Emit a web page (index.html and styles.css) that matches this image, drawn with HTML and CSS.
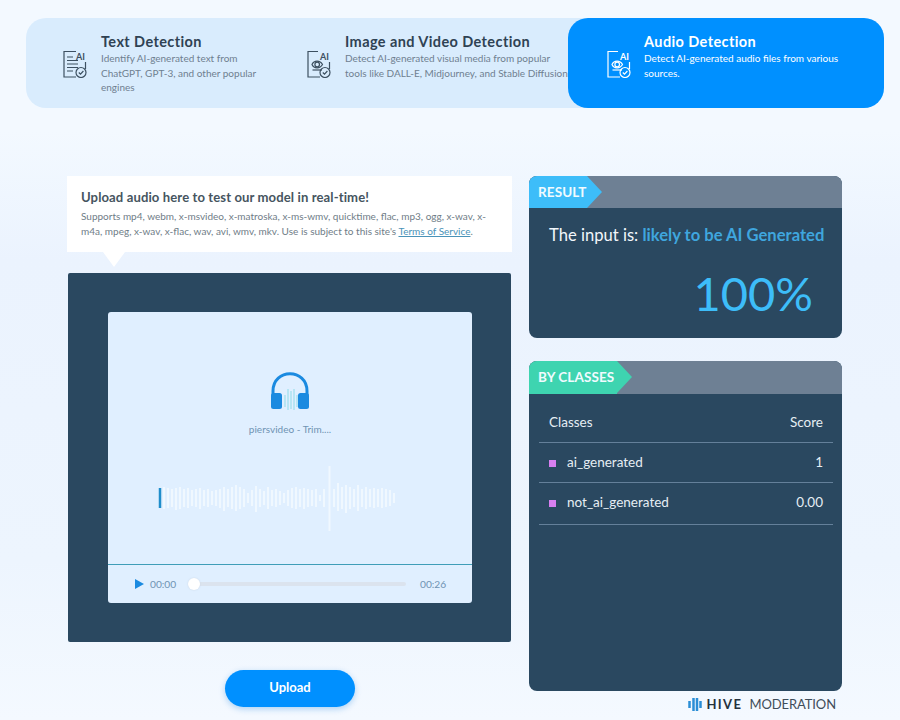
FILE: index.html
```html
<!DOCTYPE html>
<html lang="en">
<head>
<meta charset="UTF-8" />
<title>AI-Generated Content Detection</title>
<link rel="stylesheet" href="styles.css">
</head>
<body>

<nav class="tabs">
  <div class="tab tab-text">
    <svg class="tab-icon" viewBox="0 0 24 28">
      <path d="M13 1.5H1V27H13M22.500 12V19M4 7H10M4 10.500H15M4 14H15M4 17.500H15M4 21H10"/>
      <circle cx="18" cy="22.500" r="5"/>
      <path d="M15.800 22.500l1.700 1.700 2.900-3.200"/>
      <text x="13" y="9.500">AI</text>
    </svg>
    <div class="tab-copy">
      <h3>Text Detection</h3>
      <p>Identify AI-generated text from ChatGPT, GPT-3, and other popular engines</p>
    </div>
  </div>
  <div class="tab tab-image">
    <svg class="tab-icon" viewBox="0 0 24 28">
      <path d="M11 1.500H1V27H13M22.500 12V19"/>
      <path d="M5 14.500C7 10 13 10 15.500 14.500C13 19 7 19 5 14.500Z"/>
      <circle cx="10.200" cy="14.500" r="2.300"/>
      <path d="M5.500 20H15"/>
      <circle cx="18" cy="22.500" r="5"/>
      <path d="M15.800 22.500l1.700 1.700 2.900-3.200"/>
      <text x="13" y="9.500">AI</text>
    </svg>
    <div class="tab-copy">
      <h3>Image and Video Detection</h3>
      <p>Detect AI-generated visual media from popular tools like DALL-E, Midjourney, and Stable Diffusion</p>
    </div>
  </div>
  <div class="tab tab-audio">
    <svg class="tab-icon" viewBox="0 0 24 28">
      <path d="M11 1.500H1V27H13M22.500 12V19"/>
      <path d="M5 14.500C7 10 13 10 15.500 14.500C13 19 7 19 5 14.500Z"/>
      <circle cx="10.200" cy="14.500" r="2.300"/>
      <path d="M5.500 20H15"/>
      <circle cx="18" cy="22.500" r="5"/>
      <path d="M15.800 22.500l1.700 1.700 2.900-3.200"/>
      <text x="13" y="9.500">AI</text>
    </svg>
    <div class="tab-copy">
      <h3>Audio Detection</h3>
      <p>Detect AI-generated audio files from various sources.</p>
    </div>
  </div>
</nav>

<main class="layout">
  <section class="left">
    <div class="note">
      <h4>Upload audio here to test our model in real-time!</h4>
      <p>Supports mp4, webm, x-msvideo, x-matroska, x-ms-wmv, quicktime, flac, mp3, ogg, x-wav, x-m4a, mpeg, x-wav, x-flac, wav, avi, wmv, mkv. Use is subject to this site's <a href="#">Terms of Service</a>.</p>
    </div>
    <div class="stage">
      <div class="player">
        <div class="player-top">
          <svg class="headphones" viewBox="0 0 40 40">
            <path class="hp-arc" d="M3 24V20C3 -3 37 -3 37 20V24"/>
            <rect class="hp-cup" x="1" y="22" width="11" height="16" rx="2.500"/>
            <rect class="hp-cup" x="28" y="22" width="11" height="16" rx="2.500"/>
            <path class="hp-bars" d="M15 24V36M18 18V39M21 20V38M24 18V39M27 24V36"/>
          </svg>
          <div class="file-name">piersvideo - Trim....</div>
          <svg class="wave" viewBox="0 0 240 68">
            <path class="wave-bars" d="M6 22V44M10 23V43M14 24V42M18 23V45M22 22V44M26 24V42M30 23V43M34 25V41M38 24V42M42 23V44M46 25V41M50 24V42M54 26V40M58 25V41M62 24V43M66 22V46M70 24V42M74 22V44M78 20V46M82 22V44M86 24V42M90 28V38M94 25V41M98 21V47M102 24V42M106 26V40M110 22V44M114 25V41M118 24V42M122 26V40M126 28V38M130 25V41M134 23V43M138 22V44M142 24V42M146 23V44M150 24V42M154 25V41M158 24V42M162 30V36M166 24V42M171.500 1V66M176 24V42M180 18V46M184 22V44M188 20V48M192 22V44M196 24V42M200 20V46M204 24V42M208 22V44M212 24V42M216 23V43M220 24V42M224 23V43M228 24V42M232 25V41M236 28V38"/>
            <path class="wave-head" d="M2 23V43"/>
          </svg>
        </div>
        <div class="controls">
          <svg class="play" viewBox="0 0 9 10"><path d="M0 0L9 5L0 10Z"/></svg>
          <span class="time time-now">00:00</span>
          <div class="track"><span class="knob"></span></div>
          <span class="time">00:26</span>
        </div>
      </div>
    </div>
    <button class="upload">Upload</button>
  </section>

  <section class="right">
    <div class="card card-result">
      <div class="card-head"><span class="tag tag-blue">RESULT</span></div>
      <div class="result-body">
        <p class="verdict">The input is: <span>likely to be AI Generated</span></p>
        <div class="percent">100%</div>
      </div>
    </div>
    <div class="card card-classes">
      <div class="card-head"><span class="tag tag-green">BY CLASSES</span></div>
      <table class="classes">
        <tr><th>Classes</th><th class="num">Score</th></tr>
        <tr><td><i class="dot"></i>ai_generated</td><td class="num">1</td></tr>
        <tr><td><i class="dot"></i>not_ai_generated</td><td class="num">0.00</td></tr>
      </table>
    </div>
    <div class="brand">
      <svg class="brand-mark" viewBox="0 0 14 14"><path d="M1.500 4V11M5.500 1V14M9 1V14M12.500 4V11"/></svg>
      <b>HIVE</b><span>MODERATION</span>
    </div>
  </section>
</main>

</body>
</html>
```

FILE: styles.css
```css
* { box-sizing: border-box; }
html, body { height: 720px; overflow: hidden; }
body { margin: 0; padding-top: 18px; font-family: Lato, "Open Sans", sans-serif; color: #2f4253; background: linear-gradient(180deg, #f3f9ff 0, #f3f9ff 130px, #ebf3fe 260px, #edf5fe 560px, #f4f9ff 720px); }
h3, h4, p { margin: 0; }

.tabs { display: flex; width: 858px; height: 90px; margin-left: 26px; background: #d9ecfd; border-radius: 20px; }
.tab { display: flex; align-items: flex-start; padding-top: 15px; }
.tab-text { width: 244px; padding-left: 37px; }
.tab-image { width: 298px; padding-left: 37px; }
.tab-audio { width: 316px; padding-left: 39px; background: #0090ff; border-radius: 20px; color: #fff; }
.tab-icon { flex: none; width: 24px; height: 28px; margin: 17px 14px 0 0; fill: none; stroke: #3d5061; stroke-width: 1.200; }
.tab-audio .tab-icon { margin-right: 13px; stroke: #fff; }
.tab-icon text { font: 700 9px Lato, sans-serif; fill: #3d5061; stroke: none; }
.tab-audio .tab-icon text { fill: #fff; }
.tab-copy { flex: none; }
.tab-copy h3 { font-size: 14.500px; line-height: 18px; font-weight: 700; color: #2f4253; letter-spacing: .4px; }
.tab-copy p { font-size: 10px; line-height: 14.500px; color: #6f8090; }
.tab-text .tab-copy { width: 162px; }
.tab-image .tab-copy { width: 224px; }
.tab-audio .tab-copy { width: 200px; }
.tab-audio .tab-copy h3, .tab-audio .tab-copy p { color: #fff; }

.layout { display: flex; gap: 18px; margin: 68px 0 0 68px; }

.left { display: flex; flex-direction: column; width: 443px; }
.note { position: relative; height: 76px; margin: 0 -1px; padding: 13px 16px 0 14px; background: #fff; }
.note::after { content: ""; position: absolute; left: 36px; top: 76px; border-style: solid; border-width: 15px 11px 0; border-color: #fff transparent transparent; }
.note h4 { font-size: 13.100px; line-height: 17px; font-weight: 700; color: #46555f; letter-spacing: .1px; }
.note p { margin-top: 3px; font-size: 10px; line-height: 15px; color: #6f7d87; }
.note a { color: #4a93b8; }

.stage { display: flex; height: 369px; margin-top: 21px; padding: 39px 39px 39px 40px; background: #2a4860; border-radius: 2px; }
.player { display: flex; flex-direction: column; width: 100%; background: #e0efff; border-radius: 3px; }
.player-top { flex: 1; display: flex; flex-direction: column; align-items: center; padding-top: 59px; border-bottom: 1px solid #3f9db8; }
.headphones { width: 40px; height: 40px; }
.hp-arc { fill: none; stroke: #1b8ae0; stroke-width: 3; }
.hp-cup { fill: #1b8ae0; }
.hp-bars { fill: none; stroke: #8edbe8; stroke-width: 1; }
.file-name { margin-top: 12px; font-size: 10px; line-height: 12px; color: #6f93b3; }
.wave { width: 240px; height: 68px; margin-top: 30px; margin-left: -24px; }
.wave-bars { fill: none; stroke: #f6fbff; stroke-width: 2; opacity: .75; }
.wave-head { fill: none; stroke: #1f8dcb; stroke-width: 2.500; }

.controls { display: flex; align-items: center; height: 38px; padding: 0 26px 0 27px; }
.play { width: 9px; height: 10px; fill: #1b8ae0; }
.time { width: 26px; font-size: 10.200px; color: #6f93b3; }
.time-now { margin-left: 6px; }
.track { position: relative; flex: 1; height: 4px; margin: 0 14px 0 12px; background: #dbe3ee; border-radius: 2px; }
.knob { position: absolute; left: 0; top: -4px; width: 12px; height: 12px; background: #fff; border-radius: 50%; box-shadow: 0 0 2px #c9d6e4; }

.upload { align-self: flex-start; width: 130px; height: 37px; margin: 28px 0 0 157px; padding: 0 0 3px; font: 700 13px Lato, sans-serif; color: #fff; background: #0090ff; border: none; border-radius: 19px; box-shadow: 0 2px 6px rgba(0, 120, 220, .3); cursor: pointer; }

.right { display: flex; flex-direction: column; width: 313px; }
.card { background: #2a4860; border-radius: 8px; overflow: hidden; }
.card-result { height: 162px; }
.card-classes { height: 330px; margin-top: 23px; }
.card-head { display: flex; height: 32px; background: #6e8094; }
.card-classes .card-head { height: 33px; }
.tag { position: relative; display: flex; align-items: center; height: 100%; padding: 0 0 1px 9px; font-size: 13.500px; font-weight: 700; letter-spacing: .1px; color: #f1fbff; }
.tag::after { content: ""; position: absolute; left: 100%; top: 0; border-style: solid; border-width: 16px 0 16px 15px; border-color: transparent; }
.tag-blue { width: 58px; background: #3dbdf9; }
.tag-blue::after { border-left-color: #3dbdf9; }
.tag-green { width: 88px; background: #3ed4b0; }
.tag-green::after { border-width: 16.500px 0 16.500px 15px; border-left-color: #3ed4b0; }

.result-body { padding: 16px 20px 0; }
.verdict { font-size: 16.600px; line-height: 22px; color: #f2f7fb; white-space: nowrap; }
.verdict span { font-weight: 700; color: #3fa6de; }
.percent { margin-top: 21px; padding-right: 9px; text-align: right; font-size: 47px; line-height: 52px; color: #3dbdf9; }

.classes { width: 294px; margin: 9px 0 0 10px; border-collapse: collapse; font-size: 13.500px; color: #e6eef4; }
.classes th, .classes td { height: 40px; padding: 0 10px; text-align: left; font-weight: 400; border-bottom: 1px solid #64809a; }
.classes th { height: 39px; }
.classes tr:last-child td { height: 42px; padding-bottom: 2px; }
.classes .num { text-align: right; }
.dot { display: inline-block; width: 7px; height: 7px; margin-right: 11px; background: #d77ff0; }

.brand { display: flex; align-items: center; align-self: flex-end; height: 14px; margin: 6px 6px 0 0; font-size: 13px; letter-spacing: -.1px; color: #3f4d5a; }
.brand-mark { width: 14px; height: 14px; margin-right: 4px; fill: none; stroke: #2b8ed6; stroke-width: 2.500; }
.brand b { margin-right: 7px; font-size: 13px; color: #25323e; letter-spacing: 1.400px; }
```
